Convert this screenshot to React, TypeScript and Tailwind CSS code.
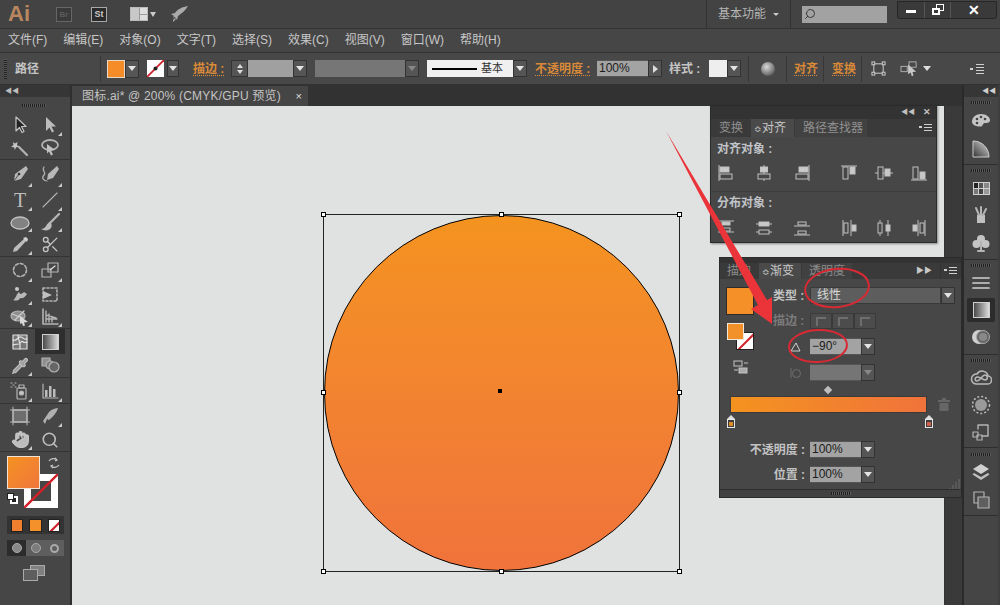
import React from "react";
import { Scissors, Pipette, Hand, Search } from "lucide-react";

const FONT = "[font-family:'Liberation_Sans','Noto_Sans_CJK_SC',sans-serif]";
const C = "#b4b4b4";

function Tool({ children, corner = true, active = false }: { children?: React.ReactNode; corner?: boolean; active?: boolean }) {
  return (
    <div className={`relative w-[30px] h-full flex items-center justify-center ${active ? "bg-[#2e2e2e]" : ""}`}>
      {children}
      {corner && <span className="absolute right-[3px] bottom-[1px] w-0 h-0 border-l-[4px] border-l-transparent border-b-[4px] border-b-[#c8c8c8]" />}
    </div>
  );
}

function I({ children, s = 20 }: { children: React.ReactNode; s?: number }) {
  return (
    <svg width={s} height={s} viewBox="0 0 20 20" fill="none" stroke={C} strokeWidth="1.2" strokeLinejoin="round" strokeLinecap="round">
      {children}
    </svg>
  );
}

function Row({ h, children, border }: { h: string; children: React.ReactNode; border?: boolean }) {
  return <div className={`flex pl-[5px] ${h} ${border ? "border-b border-[#343434]" : ""}`}>{children}</div>;
}

function Grip({ w = "w-[24px]" }: { w?: string }) {
  return <div className={`${w} h-[3px] bg-[repeating-linear-gradient(90deg,#1f1f1f_0_1px,#5a5a5a_1px_2px)]`} />;
}

function Toolbar() {
  return (
    <div className="w-[72px] shrink-0 bg-[#464646] border-r-2 border-[#2f2f2f] flex flex-col">
      <div className="h-[12px] bg-[#363636] text-[#bdbdbd] text-[7px] leading-[12px] pl-[5px]">◀◀</div>
      <div className="h-[16px] flex justify-center items-center pr-[3px]"><Grip /></div>
      <Row h="h-[24px]">
        <Tool corner={false}><I><path d="M6 2v14l3.5-3.5 2.5 5 2-1-2.5-5H16z" fill="#222" stroke="#c4c4c4" /></I></Tool>
        <Tool><I><path d="M6 2v14l3.5-3.5 2.5 5 2-1-2.5-5H16z" fill="#bcbcbc" stroke="none" /></I></Tool>
      </Row>
      <Row h="h-[23px]" border>
        <Tool corner={false}><I><path d="M2 3l2 1.5L6.5 3l-.5 3 2 2-3 .2L4 11l-1-2.8L0 8l2.500-2z" fill="#c6c6c6" stroke="none" transform="translate(1 1)" /><path d="M9 9l8 8" strokeWidth="2.200" /></I></Tool>
        <Tool corner={false}><I><ellipse cx="10" cy="7" rx="8" ry="5" strokeWidth="1.800" /><path d="M7 6l8 6-4 .5 2 4-2 1-2-4-2 2z" fill="#c0c0c0" stroke="none" /></I></Tool>
      </Row>
      <Row h="h-[28px]">
        <Tool><I><path d="M16 2l2 3-7 10-7 2 1-7z" fill="#b8b8b8" stroke="none" /><circle cx="9" cy="10" r="1.300" fill="#333" stroke="none" /><path d="M4 17l5-7" stroke="#333" strokeWidth="0.800" /></I></Tool>
        <Tool><I><path d="M17 2l2 3-6 9-6 2 1-6z" fill="#b8b8b8" stroke="none" /><path d="M4 3c-3 4 3 5 0 8s0 6 3 6" /></I></Tool>
      </Row>
      <Row h="h-[24px]">
        <Tool><span className="text-[#bdbdbd] text-[20px] leading-none [font-family:'Liberation_Serif',serif]">T</span></Tool>
        <Tool><I><path d="M3 17L17 3" strokeWidth="1.100" /></I></Tool>
      </Row>
      <Row h="h-[21px]">
        <Tool><svg width="20" height="14" viewBox="0 0 20 14"><ellipse cx="10" cy="7" rx="9" ry="6" fill="#828282" stroke="#c2c2c2" strokeWidth="1.400" /></svg></Tool>
        <Tool><I><path d="M19 1L10 10" strokeWidth="2.400" /><path d="M10 9c-2 1-3 2-4 4-1 2-3 3-5 3 3 2 8 2 10-1 1-2 1-4-1-6z" fill="#bcbcbc" stroke="none" /></I></Tool>
      </Row>
      <Row h="h-[24px]" border>
        <Tool><I><path d="M15 3l2 2L7 16l-4 1 1-4z" fill="#bcbcbc" stroke="none" /><path d="M13 3l3-1 2 2-1 3z" fill="#d0d0d0" stroke="none" /></I></Tool>
        <Tool corner={false}><Scissors size={19} color="#c8c8c8" strokeWidth={1.600} /></Tool>
      </Row>
      <Row h="h-[26px]">
        <Tool><I><circle cx="10" cy="10" r="6.500" strokeDasharray="3 2" strokeWidth="1.600" /></I></Tool>
        <Tool><I><rect x="8" y="3" width="10" height="9" /><rect x="2" y="9" width="9" height="8" /><path d="M10 10l5-4" stroke="#e0e0e0" /></I></Tool>
      </Row>
      <Row h="h-[23px]">
        <Tool><I><path d="M3 15c3-1 3-6 6-8 1 3 3 2 5 0l3 2c-2 3-4 5-7 4-1 3-4 3-7 2z" fill="#b8b8b8" stroke="none" /><circle cx="7" cy="4" r="2" fill="#c8c8c8" stroke="none" /></I></Tool>
        <Tool corner={false}><I><rect x="3" y="3" width="14" height="13" strokeDasharray="2 2" strokeWidth="1.600" /><path d="M3 6l9 4-9 4z" fill="#c0c0c0" stroke="none" /></I></Tool>
      </Row>
      <Row h="h-[23px]" border>
        <Tool><I><ellipse cx="8" cy="9" rx="7" ry="5" fill="#8e8e8e" /><path d="M2 7l11 4M5 13l9-9" stroke="#ccc" /><path d="M10 9l8 6-4 .5 1 3-2 .5-1-3-2 1z" fill="#d8d8d8" stroke="none" /></I></Tool>
        <Tool><I><path d="M3 2v15h15" strokeWidth="1.600" /><path d="M6 4v11M9 7v8M12 10v5M6 8l10 3M6 12h11" strokeWidth="1.400" /></I></Tool>
      </Row>
      <div className="flex pl-[5px] h-[25px] items-center">
        <Tool corner={false}><I><rect x="3" y="3" width="14" height="14" fill="#777" stroke="#ddd" /><path d="M3 8c4 2 5-4 8-3s3 3 6 2M3 13c3-2 6 1 8-3 1-2 3 2 6 0M8 3c0 5 3 8 2 14" stroke="#e4e4e4" /></I></Tool>
        <div className="w-[30px] h-[25px] bg-[#2e2e2e] flex items-center justify-center">
          <div className="w-[17px] h-[16px] border border-[#d0d0d0] bg-[linear-gradient(90deg,#4a4a4a,#d8d8d8)]" />
        </div>
      </div>
      <Row h="h-[24px]" border>
        <Tool><Pipette size={18} color="#c4c4c4" fill="#a0a0a0" strokeWidth={1.400} /></Tool>
        <Tool corner={false}><I><rect x="2" y="2" width="8" height="8" fill="#8f8f8f" /><circle cx="10" cy="9" r="4" fill="#777" /><circle cx="14" cy="11" r="5" fill="#666" /></I></Tool>
      </Row>
      <Row h="h-[26px]" border>
        <Tool><I><rect x="7" y="7" width="9" height="11" rx="1" /><circle cx="11.500" cy="12" r="2" fill="#c8c8c8" /><rect x="9" y="4" width="5" height="3" /><path d="M1 2h1M3 4h1M1 6h1M5 2h1M5 6h1" strokeDasharray="1 1" /></I></Tool>
        <Tool><I><path d="M3 3v14h15" /><rect x="5" y="9" width="2.500" height="7" fill="#bbb" stroke="none" /><rect x="9" y="5" width="2.500" height="11" fill="#bbb" stroke="none" /><rect x="13" y="8" width="2.500" height="8" fill="#bbb" stroke="none" /></I></Tool>
      </Row>
      <Row h="h-[24px]">
        <Tool corner={false}><I><rect x="3" y="4" width="14" height="12" fill="#6e6e6e" strokeWidth="1.400" /><path d="M0 4h20M0 16h20M3 1v18M17 1v18" strokeWidth="1" /></I></Tool>
        <Tool><I><path d="M18 2c-2 0-6 1-9 4L3 15l2 3 2-5 2 1c4-3 8-8 9-12z" fill="#b0b0b0" stroke="none" /></I></Tool>
      </Row>
      <Row h="h-[24px]" border>
        <Tool><Hand size={19} color="#c8c8c8" fill="#bdbdbd" strokeWidth={1.400} /></Tool>
        <Tool corner={false}><Search size={18} color="#bcbcbc" strokeWidth={2.200} /></Tool>
      </Row>
      {/* fill / stroke */}
      <div className="relative h-[58px]">
        <div className="absolute left-[24px] top-[22px] w-[34px] h-[34px] bg-white overflow-hidden flex items-center justify-center">
          <div className="w-[20px] h-[20px] bg-[#464646]" />
          <svg className="absolute inset-0" width="34" height="34"><path d="M0 34L34 0" stroke="#d0202a" strokeWidth="2.400" /></svg>
        </div>
        <div className="absolute left-[7px] top-[4px] w-[33px] h-[33px] bg-gradient-to-br from-[#f4921f] to-[#f0763a] border border-[#f2e4d4]" />
        <svg className="absolute left-[47px] top-[4px]" width="14" height="14" viewBox="0 0 14 14" fill="none" stroke="#c8c8c8" strokeWidth="1.200"><path d="M2 5c2-3 6-3 8-1M8 2l2 2-2 1M12 9c-2 3-6 3-8 1M6 12l-2-2 2-1" /></svg>
        <div className="absolute left-[7px] top-[41px] w-[12px] h-[12px]">
          <div className="absolute left-[3px] top-[3px] w-[8px] h-[8px] border-2 border-white bg-[#222]" />
          <div className="absolute left-0 top-0 w-[7px] h-[7px] bg-white border border-[#222]" />
        </div>
      </div>
      <div className="ml-[7px] mt-[6px] w-[57px] h-[18px] bg-[#333] flex items-center gap-[4px] px-[4px]">
        <div className="w-[13px] h-[13px] bg-[#f07f30] border border-[#222]" />
        <div className="ml-[2px] w-[13px] h-[13px] bg-[#f4912a] border border-[#222]" />
        <div className="ml-[2px] w-[13px] h-[13px] bg-white border border-[#222] relative overflow-hidden">
          <svg className="absolute inset-0" width="13" height="13"><path d="M0 13L13 0" stroke="#d0202a" strokeWidth="2.200" /></svg>
        </div>
      </div>
      <div className="ml-[7px] mt-[6px] w-[57px] h-[16px] flex">
        <div className="w-[19px] bg-[#2c2c2c] flex items-center justify-center"><div className="w-[10px] h-[10px] rounded-full bg-[#888] border border-[#aaa]" /></div>
        <div className="w-[19px] bg-[#5e5e5e] flex items-center justify-center"><div className="w-[10px] h-[10px] rounded-full border border-[#aaa] bg-[#7c7c7c]" /></div>
        <div className="w-[19px] bg-[#5e5e5e] flex items-center justify-center"><div className="w-[9px] h-[9px] rounded-full border-2 border-[#aaa]" /></div>
      </div>
      <div className="ml-[23px] mt-[9px] relative h-[18px] w-[22px]">
        <div className="absolute left-[7px] top-0 w-[15px] h-[11px] border border-[#aaa] bg-[#808080]" />
        <div className="absolute left-0 top-[4px] w-[15px] h-[12px] border border-[#aaa] bg-[#5e5e5e]" />
      </div>
    </div>
  );
}

function DockItem({ h, active, children }: { h: string; active?: boolean; children: React.ReactNode }) {
  return <div className={`${h} w-full flex items-center justify-center`}>{active ? <div className="w-[28px] h-[24px] bg-[#2c2c2c] rounded-[2px] flex items-center justify-center">{children}</div> : children}</div>;
}

function DockGrip({ h = "h-[10px]" }: { h?: string }) {
  return <div className={`${h} w-full flex items-center justify-center shrink-0`}><Grip w="w-[20px]" /></div>;
}

function Dock() {
  return (
    <div className="w-[38px] shrink-0 bg-[#454545] border-l-2 border-r-2 border-l-[#2a2a2a] border-r-[#3e3e3e] flex flex-col">
      <div className="h-[12px] bg-[#363636] text-[#cfcfcf] text-[7px] leading-[12px] text-right pr-[2px]">◀◀</div>
      <div className="h-[68px] flex flex-col items-center border-b border-[#2e2e2e]">
        <DockGrip />
        <DockItem h="h-[28px]"><I><path d="M10 3c5 0 9 3 9 6s-3 3-5 3-2 2-3 3-9 1-10-4c0-5 4-8 9-8z" fill="#c4c4c4" stroke="none" /><circle cx="6" cy="8" r="1.300" fill="#444" stroke="none" /><circle cx="10" cy="6" r="1.300" fill="#444" stroke="none" /><circle cx="14" cy="8" r="1.300" fill="#444" stroke="none" /><circle cx="6" cy="12" r="1.300" fill="#444" stroke="none" /></I></DockItem>
        <DockItem h="h-[28px]"><svg width="18" height="18" viewBox="0 0 18 18"><defs><linearGradient id="q" x1="0" y1="1" x2="1" y2="0"><stop offset="0" stopColor="#333" /><stop offset="1" stopColor="#ddd" /></linearGradient></defs><path d="M1 1c9 0 16 7 16 16H1z" fill="url(#q)" stroke="#ccc" /></svg></DockItem>
      </div>
      <div className="h-[95px] flex flex-col items-center border-b border-[#2e2e2e]">
        <DockGrip />
        <DockItem h="h-[26px]"><div className="w-[17px] h-[13px] bg-[#cfcfcf] grid grid-cols-3 gap-[1px] p-[1px]"><div className="bg-[#222]" /><div className="bg-[#555]" /><div className="bg-[#888]" /><div className="bg-[#777]" /><div className="bg-[#444]" /><div className="bg-[#999]" /></div></DockItem>
        <DockItem h="h-[28px]"><I><rect x="6" y="10" width="8" height="8" fill="#c0c0c0" stroke="none" /><path d="M8 10L5 3M10 10V2M12 10l3-6" strokeWidth="2" /></I></DockItem>
        <DockItem h="h-[28px]"><I><circle cx="10" cy="6" r="4" fill="#c4c4c4" stroke="none" /><circle cx="5.500" cy="11" r="4" fill="#c4c4c4" stroke="none" /><circle cx="14.500" cy="11" r="4" fill="#c4c4c4" stroke="none" /><path d="M10 9v8M7 18h6" strokeWidth="2" /></I></DockItem>
      </div>
      <div className="h-[95px] flex flex-col items-center border-b border-[#2e2e2e]">
        <DockGrip />
        <DockItem h="h-[26px]"><I><path d="M2 5h16M2 10h16M2 15h16" stroke="#d0d0d0" strokeWidth="1.700" /></I></DockItem>
        <DockItem h="h-[28px]" active><div className="w-[17px] h-[16px] border border-[#d0d0d0] bg-[linear-gradient(90deg,#4a4a4a,#dcdcdc)]" /></DockItem>
        <DockItem h="h-[26px]"><svg width="20" height="20" viewBox="0 0 20 20"><circle cx="8" cy="10" r="7" fill="#d0d0d0" /><circle cx="12" cy="10" r="6.500" fill="#666" stroke="#aaa" /><circle cx="12" cy="10" r="4" fill="#888" /></svg></DockItem>
      </div>
      <div className="h-[93px] flex flex-col items-center border-b border-[#2e2e2e]">
        <DockGrip />
        <DockItem h="h-[26px]"><svg width="22" height="16" viewBox="0 0 22 16" fill="none" stroke="#b8b8b8" strokeWidth="1.500"><path d="M6 14h11a4 4 0 0 0 1-8 6 6 0 0 0-11-2 5 5 0 0 0-1 10z" /><path d="M7 11c3 0 5-6 8-6s3 5 0 5-5-4-8-3-2 4 0 4" /></svg></DockItem>
        <DockItem h="h-[27px]"><svg width="20" height="20" viewBox="0 0 20 20"><circle cx="10" cy="10" r="6" fill="#9a9a9a" /><circle cx="10" cy="10" r="8.500" fill="none" stroke="#bbb" strokeWidth="1.500" strokeDasharray="2 2" /></svg></DockItem>
        <DockItem h="h-[28px]"><I><path d="M7 7V3h10v11h-6" strokeWidth="1.400" /><rect x="2" y="10" width="5" height="5" /><rect x="6" y="13" width="5" height="5" /></I></DockItem>
      </div>
      <div className="h-[68px] flex flex-col items-center border-b border-[#2e2e2e]">
        <DockGrip h="h-[12px]" />
        <DockItem h="h-[24px]"><svg width="20" height="18" viewBox="0 0 20 18"><path d="M10 1l8 5-8 5-8-5z" fill="#d0d0d0" /><path d="M3 10l7 4 7-4 1.500 1.500L10 17l-8.500-5.500z" fill="#c0c0c0" /></svg></DockItem>
        <DockItem h="h-[31px]"><I><rect x="3" y="2" width="10" height="11" /><rect x="7" y="7" width="11" height="11" fill="#5f5f5f" /></I></DockItem>
      </div>
    </div>
  );
}

function Drop({ w = "w-[14px]", h = "h-[17px]", dim = false }: { w?: string; h?: string; dim?: boolean }) {
  return (
    <div className={`${w} ${h} shrink-0 bg-[#555] border border-[#333] flex items-center justify-center`}>
      <span className={`w-0 h-0 border-l-[4px] border-r-[4px] border-t-[5px] border-l-transparent border-r-transparent ${dim ? "border-t-[#888]" : "border-t-[#e4e4e4]"}`} />
    </div>
  );
}

function Field({ w, text, dim, h = "h-[17px]" }: { w: string; text?: string; dim?: boolean; h?: string }) {
  return (
    <div className={`${w} ${h} shrink-0 ${dim ? "bg-[#757575]" : "bg-[#a3a3a3]"} text-[#1c1c1c] text-[12px] leading-[14px] pl-[2px] border-y border-[#555]`}>{text}</div>
  );
}

function Sep() {
  return <div className="w-px h-[26px] bg-[#373737] shrink-0" />;
}

const Orange = ({ children, className = "" }: { children: React.ReactNode; className?: string }) => (
  <span className={`text-[#d98a38] text-[12px] font-bold underline decoration-dotted underline-offset-2 shrink-0 whitespace-nowrap ${className}`}>{children}</span>
);

function ControlBar() {
  return (
    <div className="h-[33px] bg-[#484848] border-y border-[#323232] flex items-center text-[12px] shrink-0">
      <div className="ml-[4px] w-[3px] h-[20px] bg-[repeating-linear-gradient(0deg,#222_0_1px,#555_1px_2px)]" />
      <span className="ml-[8px] w-[24px] text-[#c4c4c4] font-bold">路径</span>
      <div className="ml-[61px]"><Sep /></div>
      <div className="ml-[6px] w-[18px] h-[18px] bg-[#f58c28] border border-[#e8d8c8]" />
      <Drop h="h-[18px]" />
      <div className="ml-[8px] w-[17px] h-[17px] bg-white relative overflow-hidden">
        <svg className="absolute inset-0" width="17" height="17"><path d="M0 17L17 0" stroke="#d0202a" strokeWidth="1.800" /><circle cx="8.500" cy="8.500" r="2" fill="#222" /></svg>
      </div>
      <div className="ml-[3px]"><Drop w="w-[12px]" /></div>
      <Orange className="ml-[14px] w-[31px]">描边 :</Orange>
      <div className="ml-[7px] w-[17px] h-[17px] bg-[#555] border border-[#333] flex flex-col items-center justify-center gap-[2px]">
        <span className="w-0 h-0 border-l-[3px] border-r-[3px] border-b-[4px] border-l-transparent border-r-transparent border-b-[#ddd]" />
        <span className="w-0 h-0 border-l-[3px] border-r-[3px] border-t-[4px] border-l-transparent border-r-transparent border-t-[#ddd]" />
      </div>
      <div className="w-[45px] h-[17px] bg-[#a0a0a0]" />
      <Drop />
      <div className="ml-[8px] w-[90px] h-[17px] bg-[#767676]" />
      <Drop dim />
      <div className="ml-[8px] w-[86px] h-[17px] bg-[#f0f0f0] flex items-center pl-[5px]">
        <div className="w-[45px] h-[2px] bg-black" />
        <span className="ml-[4px] text-[#333] text-[11px] leading-none">基本</span>
      </div>
      <Drop />
      <Orange className="ml-[8px] w-[56px]">不透明度 :</Orange>
      <div className="ml-[6px]"><Field w="w-[51px]" text="100%" /></div>
      <div className="w-[14px] h-[17px] bg-[#555] border border-[#333] flex items-center justify-center">
        <span className="w-0 h-0 border-t-[4px] border-b-[4px] border-l-[5px] border-t-transparent border-b-transparent border-l-[#ddd]" />
      </div>
      <span className="ml-[7px] w-[34px] text-[#c4c4c4] font-bold shrink-0 whitespace-nowrap">样式 :</span>
      <div className="ml-[6px] w-[18px] h-[17px] bg-[#eeeeee]" />
      <Drop />
      <div className="ml-[7px]"><Sep /></div>
      <div className="ml-[12px] w-[14px] h-[14px] rounded-full bg-[radial-gradient(circle_at_40%_35%,#d8d8d8,#777_60%,#333)]" />
      <div className="ml-[11px]"><Sep /></div>
      <Orange className="ml-[7px]">对齐</Orange>
      <div className="ml-[5px]"><Sep /></div>
      <Orange className="ml-[8px]">变换</Orange>
      <div className="ml-[5px]"><Sep /></div>
      <svg className="ml-[9px] shrink-0" width="15" height="15" viewBox="0 0 16 16" fill="none" stroke="#c8c8c8" strokeWidth="1.100"><rect x="3" y="3" width="10" height="10" /><rect x="1" y="1" width="3" height="3" fill="#484848" /><rect x="12" y="1" width="3" height="3" fill="#484848" /><rect x="1" y="12" width="3" height="3" fill="#484848" /><rect x="12" y="12" width="3" height="3" fill="#484848" /></svg>
      <svg className="ml-[14px] shrink-0" width="18" height="16" viewBox="0 0 20 18" fill="none" stroke="#b8b8b8"><rect x="1" y="6" width="7" height="6" /><rect x="10" y="1" width="8" height="6" /><path d="M9 4l9 8-4 .5 1 4-2 .5-1-4-3 2z" fill="#c8c8c8" stroke="none" /></svg>
      <span className="ml-[5px] w-0 h-0 border-l-[4px] border-r-[4px] border-t-[5px] border-l-transparent border-r-transparent border-t-[#ddd]" />
      <svg className="ml-[39px] shrink-0" width="14" height="12" viewBox="0 0 14 12" stroke="#d0d0d0"><path d="M0 6h3" strokeWidth="2" /><path d="M6 1.500h8M6 4.500h8M6 7.500h8M6 10.500h8" /></svg>
    </div>
  );
}

function TitleBar() {
  return (
    <div className="h-[28px] bg-[#434343] flex items-center shrink-0 relative">
      <span className="ml-[8px] w-[22px] text-[#b8865f] text-[22px] font-bold leading-none">Ai</span>
      <div className="ml-[26px] w-[16px] h-[15px] border border-[#666] bg-[#3a3a3a] text-[#5c5c5c] text-[8px] font-bold leading-[13px] text-center">Br</div>
      <div className="ml-[19px] w-[16px] h-[15px] border border-[#a8a8a8] bg-[#2b2b2b] text-[#c8c8c8] text-[9px] font-bold leading-[13px] text-center">St</div>
      <div className="ml-[23px] w-[18px] h-[14px] border border-[#bbb] bg-[#999] flex gap-[1px]">
        <div className="w-[8px] h-full bg-[#c8c8c8]" />
        <div className="flex-1 flex flex-col gap-[1px]"><div className="flex-1 bg-[#ddd]" /><div className="flex-1 bg-[#ddd]" /></div>
      </div>
      <span className="ml-[2px] w-0 h-0 border-l-[3px] border-r-[3px] border-t-[5px] border-l-transparent border-r-transparent border-t-[#ccc]" />
      <svg className="ml-[14px] shrink-0" width="18" height="18" viewBox="0 0 18 18" fill="#aaa"><path d="M18 1C12 2 8 4 5 8L1 9l3 2-1 2 2-1 2 3 1-4c4-3 8-6 10-10zM3 15l2-2 1 1-3 3z" /></svg>
      <div className="ml-auto flex items-center h-full">
        <div className="w-px h-full bg-[#333]" />
        <span className="ml-[11px] w-[48px] text-[12px] text-[#b4b4b4] whitespace-nowrap">基本功能</span>
        <span className="ml-[7px] w-0 h-0 border-l-[3px] border-r-[3px] border-t-[3px] border-l-transparent border-r-transparent border-t-[#ccc]" />
        <div className="ml-[11px] w-px h-full bg-[#333]" />
        <div className="ml-[11px] w-[85px] h-[17px] bg-[#a2a2a2] flex items-center pl-[2px]">
          <Search size={12} color="#222" strokeWidth={1.600} className="-scale-x-100" />
        </div>
        <div className="ml-[10px] mr-[3px] mb-[9px] w-[100px] h-[18px] bg-[#3a3a3a] border border-[#262626] rounded-b-[3px] flex">
          <div className="w-[27px] flex items-center justify-center border-r border-[#555] pt-[3px]"><div className="w-[10px] h-[3px] bg-white" /></div>
          <div className="w-[26px] flex items-center justify-center border-r border-[#555]">
            <div className="relative w-[12px] h-[11px]"><div className="absolute right-0 top-0 w-[8px] h-[7px] border border-white" /><div className="absolute left-0 bottom-0 w-[8px] h-[7px] border-2 border-white bg-[#3a3a3a]" /></div>
          </div>
          <div className="flex-1 flex items-center justify-center text-white text-[14px] font-bold leading-none">✕</div>
        </div>
      </div>
    </div>
  );
}

function MenuBar() {
  const items = ["文件(F)", "编辑(E)", "对象(O)", "文字(T)", "选择(S)", "效果(C)", "视图(V)", "窗口(W)", "帮助(H)"];
  return (
    <div className="h-[24px] bg-[#464646] border-t border-[#343434] flex items-center gap-[16px] pl-[8px] pb-[2px] text-[12px] text-[#c6c6c6] shrink-0">
      {items.map((t) => <span key={t} className="whitespace-nowrap">{t}</span>)}
    </div>
  );
}

function Handle({ className = "" }: { className?: string }) {
  return <div className={`absolute w-[5px] h-[5px] bg-white border border-black ${className}`} />;
}

function Canvas() {
  return (
    <div className="relative flex-1 bg-[#dfe2e1]">
      <div className="absolute left-[251px] top-[108px] w-[357px] h-[358px] border border-[#222]">
        <div className="w-full h-full rounded-full border border-black bg-gradient-to-b from-[#f4931f] to-[#f0733b]" />
        <Handle className="-left-[3px] -top-[3px]" />
        <Handle className="left-[175px] -top-[3px]" />
        <Handle className="-right-[3px] -top-[3px]" />
        <Handle className="-left-[3px] top-[175px]" />
        <Handle className="-right-[3px] top-[175px]" />
        <Handle className="-left-[3px] -bottom-[3px]" />
        <Handle className="left-[175px] -bottom-[3px]" />
        <Handle className="-right-[3px] -bottom-[3px]" />
        <div className="absolute left-[174px] top-[174px] w-[4px] h-[4px] bg-black" />
      </div>
    </div>
  );
}

function AlignIcon({ kind }: { kind: number }) {
  const paths: Record<number, React.ReactNode> = {
    0: <><path d="M2 1v16" /><rect x="3" y="3" width="9" height="5" fill="#c8c8c8" /><rect x="3" y="10" width="12" height="5" /></>,
    1: <><path d="M9 1v2M9 8v2M9 15v2" /><rect x="5.500" y="3" width="7" height="5" fill="#c8c8c8" /><rect x="3" y="10" width="12" height="5" /></>,
    2: <><path d="M16 1v16" /><rect x="6" y="3" width="9" height="5" fill="#c8c8c8" /><rect x="3" y="10" width="12" height="5" /></>,
    3: <><path d="M1 2h16" /><rect x="3" y="3" width="5" height="12" /><rect x="10" y="3" width="5" height="7" fill="#c8c8c8" /></>,
    4: <><path d="M0 9h3M8 9h2M15 9h3" /><rect x="3" y="3" width="5" height="12" /><rect x="10" y="5" width="5" height="7" fill="#c8c8c8" /></>,
    5: <><path d="M1 16h16" /><rect x="3" y="3" width="5" height="12" /><rect x="10" y="8" width="5" height="7" fill="#c8c8c8" /></>,
    6: <><path d="M1 2h16M1 13h16" /><rect x="5" y="3" width="8" height="3" fill="#c8c8c8" /><rect x="5" y="9" width="8" height="3" /></>,
    7: <><path d="M1 5h3M14 5h3M1 13h3M14 13h3" /><rect x="4" y="3" width="10" height="4" fill="#c8c8c8" /><rect x="4" y="11" width="10" height="4" /></>,
    8: <><path d="M1 7h16M1 16h16" /><rect x="5" y="3" width="8" height="3" /><rect x="5" y="12" width="8" height="3" /></>,
    9: <><path d="M3 1v16M11 1v16" /><rect x="4" y="4" width="4" height="10" /><rect x="12" y="6" width="4" height="6" fill="#c8c8c8" /></>,
    10: <><path d="M5 1v3M5 14v3M13 1v5M13 12v5" /><rect x="3" y="4" width="4" height="10" /><rect x="11" y="6" width="4" height="6" fill="#c8c8c8" /></>,
    11: <><path d="M8 1v16M15 1v16" /><rect x="3" y="6" width="4" height="6" fill="#c8c8c8" /><rect x="10" y="4" width="4" height="10" /></>,
  };
  return <svg width="18" height="18" viewBox="0 0 18 18" fill="none" stroke="#c0c0c0" strokeWidth="1">{paths[kind]}</svg>;
}

function AlignRow({ start }: { start: number }) {
  return (
    <div className="flex items-center pl-[5px]">
      <div className="flex gap-[20px]">
        {[0, 1, 2].map((i) => <AlignIcon key={i} kind={start + i} />)}
      </div>
      <div className="flex gap-[17px] ml-[29px]">
        {[3, 4, 5].map((i) => <AlignIcon key={i} kind={start + i} />)}
      </div>
    </div>
  );
}

function AlignPanel() {
  return (
    <div className="absolute left-[710px] top-[105px] w-[227px] h-[138px] bg-[#474747] border border-[#2b2b2b] shadow-[1px_1px_2px_rgba(0,0,0,0.4)] text-[12px] flex flex-col">
      <div className="h-[13px] bg-[#333] flex items-center justify-end gap-[8px] pr-[5px] text-[#c0c0c0] text-[7px]"><span>◀◀</span><span className="text-[9px] font-bold">✕</span></div>
      <div className="h-[18px] bg-[#3a3a3a] flex items-stretch text-[#909090]">
        <span className="pl-[8px] w-[40px] leading-[18px]">变换</span>
        <span className="w-[43px] bg-[#4a4a4a] text-[#c8c8c8] leading-[18px] pl-[3px] whitespace-nowrap"><span className="text-[9px]">≎</span>对齐</span>
        <span className="ml-[1px] w-[72px] pl-[8px] bg-[#414141] leading-[18px] whitespace-nowrap">路径查找器</span>
        <svg className="ml-auto mr-[3px] self-center" width="14" height="10" viewBox="0 0 14 10" stroke="#d0d0d0"><path d="M0 4h3" strokeWidth="2" /><path d="M5 1.500h8M5 4.500h8M5 7.500h8" /></svg>
      </div>
      <div className="flex-1 flex flex-col">
        <div className="h-[55px] border-b border-[#3e3e3e] pl-[6px] pt-[3px]">
          <div className="text-[#c0c4c8] font-bold leading-[18px] h-[18px] whitespace-nowrap">对齐对象 :</div>
          <div className="mt-[6px] -ml-[5px]"><AlignRow start={0} /></div>
        </div>
        <div className="pl-[6px] pt-[2px]">
          <div className="text-[#c0c4c8] font-bold leading-[18px] h-[18px] whitespace-nowrap">分布对象 :</div>
          <div className="mt-[7px] -ml-[5px]"><AlignRow start={6} /></div>
        </div>
      </div>
    </div>
  );
}

function Stop({ color }: { color: string }) {
  return (
    <div className="flex flex-col items-center">
      <span className="w-0 h-0 border-l-[4px] border-r-[4px] border-b-[4px] border-l-transparent border-r-transparent border-b-[#ddd]" />
      <div className="w-[8px] h-[9px] bg-[#3c3c3c] border border-[#e8e8e8] flex items-center justify-center"><div className="w-[4px] h-[4px]" style={{ backgroundColor: color }} /></div>
    </div>
  );
}

function CornerBtn() {
  return (
    <div className="w-[22px] h-[16px] border border-[#3a3a3a] bg-[#4c4c4c] flex items-center justify-center">
      <div className="w-[10px] h-[9px] border-l-2 border-t-2 border-[#6e6e6e]" />
    </div>
  );
}

function GradientPanel() {
  return (
    <div className="absolute left-[719px] top-[257px] w-[243px] h-[241px] bg-[#474747] border border-[#2b2b2b] text-[12px] flex flex-col">
      <div className="h-[5px] bg-[#333]" />
      <div className="h-[16px] bg-[#3a3a3a] flex items-stretch text-[#8a8a8a] leading-[16px]">
        <span className="pl-[7px] w-[39px]">描边</span>
        <span className="w-[42px] bg-[#4a4a4a] text-[#c8c8c8] pl-[3px] whitespace-nowrap"><span className="text-[9px]">≎</span>渐变</span>
        <span className="ml-[1px] w-[50px] pl-[7px] bg-[#414141] whitespace-nowrap">透明度</span>
        <span className="ml-auto text-[#c8c8c8] text-[8px] mr-[8px]">▶▶</span>
        <div className="w-px h-full bg-[#333] mr-[3px]" />
        <svg className="mr-[3px] self-center" width="14" height="10" viewBox="0 0 14 10" stroke="#d0d0d0"><path d="M0 4h3" strokeWidth="2" /><path d="M5 1.500h8M5 4.500h8M5 7.500h8" /></svg>
      </div>
      <div className="flex pt-[8px]">
        <div className="w-[53px] pl-[6px] shrink-0">
          <div className="w-[28px] h-[28px] bg-[#f58f27] border border-[#2c2c2c]" />
          <div className="relative h-[27px] mt-[8px]">
            <div className="absolute left-[10px] top-[9px] w-[18px] h-[18px] bg-white overflow-hidden border border-[#222]">
              <svg width="18" height="18"><path d="M0 18L18 0" stroke="#d0202a" strokeWidth="2" /></svg>
            </div>
            <div className="absolute left-[1px] top-0 w-[17px] h-[17px] bg-[#f2902a] border border-[#f0e6da]" />
          </div>
          <svg className="ml-[7px] mt-[10px]" width="16" height="14" viewBox="0 0 16 14" fill="none" stroke="#c4c4c4"><rect x="1" y="1" width="8" height="5" /><rect x="6" y="8" width="8" height="5" fill="#aaa" /><path d="M11 3h4M1 10h4" /></svg>
        </div>
        <div className="flex-1">
          <div className="flex items-center h-[17px]">
            <span className="w-[37px] text-[#c2c2c2] font-bold whitespace-nowrap">类型 :</span>
            <div className="w-[131px] h-[17px] bg-[#5d5d5d] border border-[#3a3a3a] text-[#d8d8d8] leading-[15px] pl-[6px]">线性</div>
            <Drop />
          </div>
          <div className="flex items-center h-[16px] mt-[9px]">
            <span className="w-[37px] text-[#7a7a7a] font-bold whitespace-nowrap">描边 :</span>
            <CornerBtn /><CornerBtn /><CornerBtn />
          </div>
          <div className="flex items-center h-[17px] mt-[9px]">
            <svg className="ml-[17px] mr-[9px]" width="11" height="10" viewBox="0 0 11 10" fill="none" stroke="#d0d0d0"><path d="M6 1L1 9h9z" /></svg>
            <Field w="w-[51px]" text="−90°" />
            <Drop />
          </div>
          <div className="flex items-center h-[17px] mt-[9px]">
            <svg className="ml-[17px] mr-[9px]" width="11" height="12" viewBox="0 0 11 12" fill="none" stroke="#6e6e6e"><circle cx="6.500" cy="6.500" r="4" /><path d="M1 1v10" /></svg>
            <Field w="w-[51px]" dim />
            <Drop dim />
          </div>
        </div>
      </div>
      <div className="h-[15px] ml-[105px] flex items-center"><div className="w-[6px] h-[6px] rotate-45 bg-[#bdbdbd] translate-y-[1px]" /></div>
      <div className="flex items-center">
        <div className="ml-[10px] w-[197px] h-[17px] bg-[linear-gradient(90deg,#f4931f,#f0733b)] border border-[#3a3a3a]" />
        <svg className="ml-[11px]" width="12" height="13" viewBox="0 0 12 13" fill="#666"><rect x="0" y="2" width="12" height="2" /><rect x="4" y="0" width="4" height="2" /><path d="M1.500 5h9v8h-9z" /></svg>
      </div>
      <div className="flex justify-between mt-[2px] h-[17px] pl-[7px] pr-[28px]">
        <Stop color="#e08a24" />
        <Stop color="#d0604a" />
      </div>
      <div className="flex items-center h-[17px] mt-[9px]">
        <span className="w-[85px] mr-[5px] text-right text-[#c2c2c2] font-bold whitespace-nowrap">不透明度 :</span>
        <Field w="w-[51px]" text="100%" />
        <Drop />
      </div>
      <div className="flex items-center h-[17px] mt-[8px]">
        <span className="w-[85px] mr-[5px] text-right text-[#c2c2c2] font-bold whitespace-nowrap">位置 :</span>
        <Field w="w-[51px]" text="100%" />
        <Drop />
      </div>
      <div className="relative mt-auto h-[8px] bg-[#414141] border-t border-[#2e2e2e] flex items-center justify-center">
        <Grip w="w-[20px]" />
        <svg className="absolute right-[1px] -top-[12px]" width="12" height="12" viewBox="0 0 12 12" stroke="#6a6a6a"><path d="M2 11v-1M5 11V7M8 11V4M11 11V1" /></svg>
      </div>
    </div>
  );
}

export default function App() {
  return (
    <div className={`relative w-[1000px] h-[605px] overflow-hidden bg-[#3c3c3c] flex flex-col ${FONT}`}>
      <TitleBar />
      <MenuBar />
      <ControlBar />
      <div className="flex-1 flex min-h-0">
        <Toolbar />
        <div className="flex-1 flex flex-col min-w-0">
          <div className="h-[21px] bg-[#323232] flex items-end shrink-0">
            <div className="w-[236px] h-[20px] bg-[#454545] text-[#c4c4c4] text-[12px] leading-[20px] pl-[10px] flex whitespace-nowrap tracking-[0.2px]">
              <span>图标.ai* @ 200% (CMYK/GPU 预览)</span>
              <span className="ml-auto mr-[6px] text-[#ddd] text-[11px]">×</span>
            </div>
          </div>
          <div className="flex-1 flex min-h-0">
            <Canvas />
            <div className="w-[18px] bg-[#3a3a3a] border-l border-[#333]" />
          </div>
        </div>
        <Dock />
      </div>
      <AlignPanel />
      <GradientPanel />
      <svg className="absolute inset-0 pointer-events-none" width="1000" height="605" viewBox="0 0 1000 605" fill="none">
        <path d="M666 131L767 300 772 297 772 324 751 309 758 305z" fill="#ea3439" stroke="none" />
        <ellipse cx="837" cy="288" rx="32" ry="19" transform="rotate(-6 837 288)" stroke="#d92a33" strokeWidth="2" />
        <ellipse cx="818" cy="346" rx="29" ry="16" transform="rotate(-3 818 346)" stroke="#d92a33" strokeWidth="2" />
      </svg>
    </div>
  );
}
